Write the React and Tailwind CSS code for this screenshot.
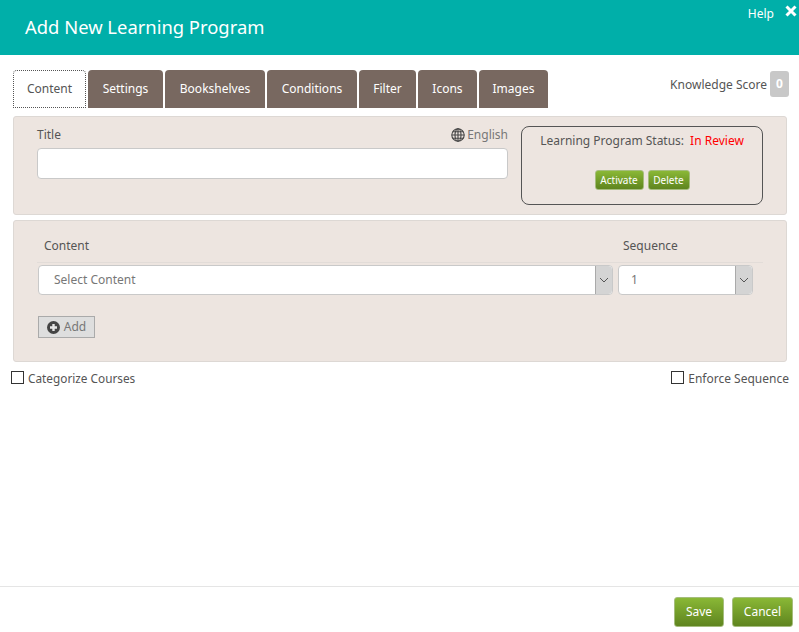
import React from 'react';

const font = { fontFamily: '"Noto Sans", sans-serif' };

const tabs = [
  { label: 'Settings', w: 'w-[75px]' },
  { label: 'Bookshelves', w: 'w-[100px]' },
  { label: 'Conditions', w: 'w-[90px]' },
  { label: 'Filter', w: 'w-[57px]' },
  { label: 'Icons', w: 'w-[59px]' },
  { label: 'Images', w: 'w-[69px]' },
];

function Chevron() {
  return (
    <svg width="10" height="6" viewBox="0 0 10 6" fill="none" stroke="#555" strokeWidth="1">
      <path d="M1 1l4 4 4-4" />
    </svg>
  );
}

function SelectBox({ text, className }) {
  return (
    <div className={`flex h-[30px] rounded-[4px] border border-[#c9c9c9] bg-white ${className}`}>
      <span className="flex-1 text-[12px] leading-[28px] text-[#777]">{text}</span>
      <span className="flex w-[17px] items-center justify-center rounded-r-[4px] border-l border-[#aaa] bg-[#d4d4d4]">
        <Chevron />
      </span>
    </div>
  );
}

function GreenButton({ children, className }) {
  return (
    <button className={`rounded-[3px] border border-[#a5bd7d] bg-gradient-to-b from-[#8ab836] to-[#5f851f] text-white ${className}`}>
      {children}
    </button>
  );
}

export default function App() {
  return (
    <div className="flex h-[632px] w-[799px] flex-col overflow-hidden bg-white text-[#555]" style={font}>
      <header className="flex h-[55px] shrink-0 justify-between bg-[#00afa9] pl-[25px] pr-[2px] text-white">
        <h1 className="pt-[13px] text-[18.4px] leading-[27px]">Add New Learning Program</h1>
        <div className="flex items-start gap-[11px] pt-[4px]">
          <span className="pt-[1px] text-[12px] leading-[18px]">Help</span>
          <svg width="12" height="12" viewBox="0 0 12 12" className="mt-[1px]" stroke="white" strokeWidth="3">
            <path d="M1.5 1.5l9 9M10.5 1.5l-9 9" />
          </svg>
        </div>
      </header>

      <div className="flex items-start justify-between pl-[13px] pr-[10px] pt-[15px]">
        <div className="flex h-[38px] gap-[2px]">
          <div className="flex w-[73px] items-center justify-center rounded-t-[4px] border border-dotted border-[#555] text-[12px]">
            Content
          </div>
          {tabs.map((t) => (
            <div key={t.label} className={`flex items-center justify-center rounded-t-[4px] bg-[#786860] text-[12px] text-white ${t.w}`}>
              {t.label}
            </div>
          ))}
        </div>
        <div className="flex items-center gap-[3px] pt-[1px]">
          <span className="pt-[2px] text-[12px]">Knowledge Score</span>
          <span className="flex h-[26px] w-[19px] items-center justify-center rounded-[3px] bg-[#c8c8c8] text-[12px] font-bold text-white">0</span>
        </div>
      </div>

      <section className="ml-[13px] mr-[12px] mt-[8px] flex h-[99px] rounded-[3px] border border-[#ddd8d4] bg-[#ede5e0] pl-[23px] pr-[23px]">
        <div className="w-[471px]">
          <div className="flex h-[31px] items-center justify-between pt-[4px]">
            <span className="text-[12px]">Title</span>
            <span className="flex items-center gap-[2px] text-[12px] text-[#777]">
              <svg width="14" height="14" viewBox="0 0 14 14" fill="none" stroke="#444" strokeWidth="1.1">
                <circle cx="7" cy="7" r="6.2" />
                <ellipse cx="7" cy="7" rx="3" ry="6.2" />
                <path d="M7 .8v12.4M.8 7h12.4M1.7 3.8h10.6M1.7 10.2h10.6" />
              </svg>
              English
            </span>
          </div>
          <div className="h-[31px] rounded-[4px] border border-[#c9c9c9] bg-white" />
        </div>
        <div className="ml-[13px] mt-[9px] flex h-[79px] w-[242px] flex-col items-center rounded-[8px] border border-[#555]">
          <div className="mt-[5px] flex gap-[6px] text-[12px] leading-[18px]">
            <span>Learning Program Status:</span>
            <span className="text-[#f00]">In Review</span>
          </div>
          <div className="mt-[20px] flex gap-[4px]">
            <GreenButton className="h-[20px] w-[49px] text-[10px] leading-none">Activate</GreenButton>
            <GreenButton className="h-[20px] w-[42px] text-[10px] leading-none">Delete</GreenButton>
          </div>
        </div>
      </section>

      <section className="ml-[13px] mr-[12px] mt-[5px] h-[142px] rounded-[3px] border border-[#ddd8d4] bg-[#ede5e0] pl-[23px] pr-[23px]">
        <div className="flex h-[42px] items-center border-b border-[#e2dcd8] pl-[7px] pt-[8px] text-[12px]">
          <span className="w-[579px]">Content</span>
          <span>Sequence</span>
        </div>
        <div className="mt-[2px] flex gap-[5px] pl-[1px]">
          <SelectBox text="Select Content" className="w-[575px] pl-[15px]" />
          <SelectBox text="1" className="w-[135px] pl-[12px]" />
        </div>
        <button className="ml-[1px] mt-[21px] flex h-[22px] w-[57px] items-center justify-center gap-[4px] border border-[#aaa] bg-[#dedede] text-[12px] text-[#777]">
          <svg width="13" height="13" viewBox="0 0 13 13">
            <circle cx="6.5" cy="6.5" r="6.5" fill="#444" />
            <path d="M6.5 3v7M3 6.5h7" stroke="#e5e5e5" strokeWidth="2.4" />
          </svg>
          Add
        </button>
      </section>

      <div className="flex justify-between pl-[11px] pr-[10px] pt-[8px] text-[12px]">
        <label className="flex items-center gap-[4px] text-[11.8px]">
          <span className="mb-[4px] h-[13px] w-[13px] border border-[#333]" />
          Categorize Courses
        </label>
        <label className="flex items-center gap-[4px]">
          <span className="mb-[4px] h-[13px] w-[13px] border border-[#333]" />
          Enforce Sequence
        </label>
      </div>

      <footer className="mt-auto flex h-[46px] justify-end gap-[8px] border-t border-[#e5e5e5] pr-[6px] pt-[10px]">
        <GreenButton className="h-[30px] w-[50px] text-[12px]">Save</GreenButton>
        <GreenButton className="h-[30px] w-[61px] text-[12px]">Cancel</GreenButton>
      </footer>
    </div>
  );
}
